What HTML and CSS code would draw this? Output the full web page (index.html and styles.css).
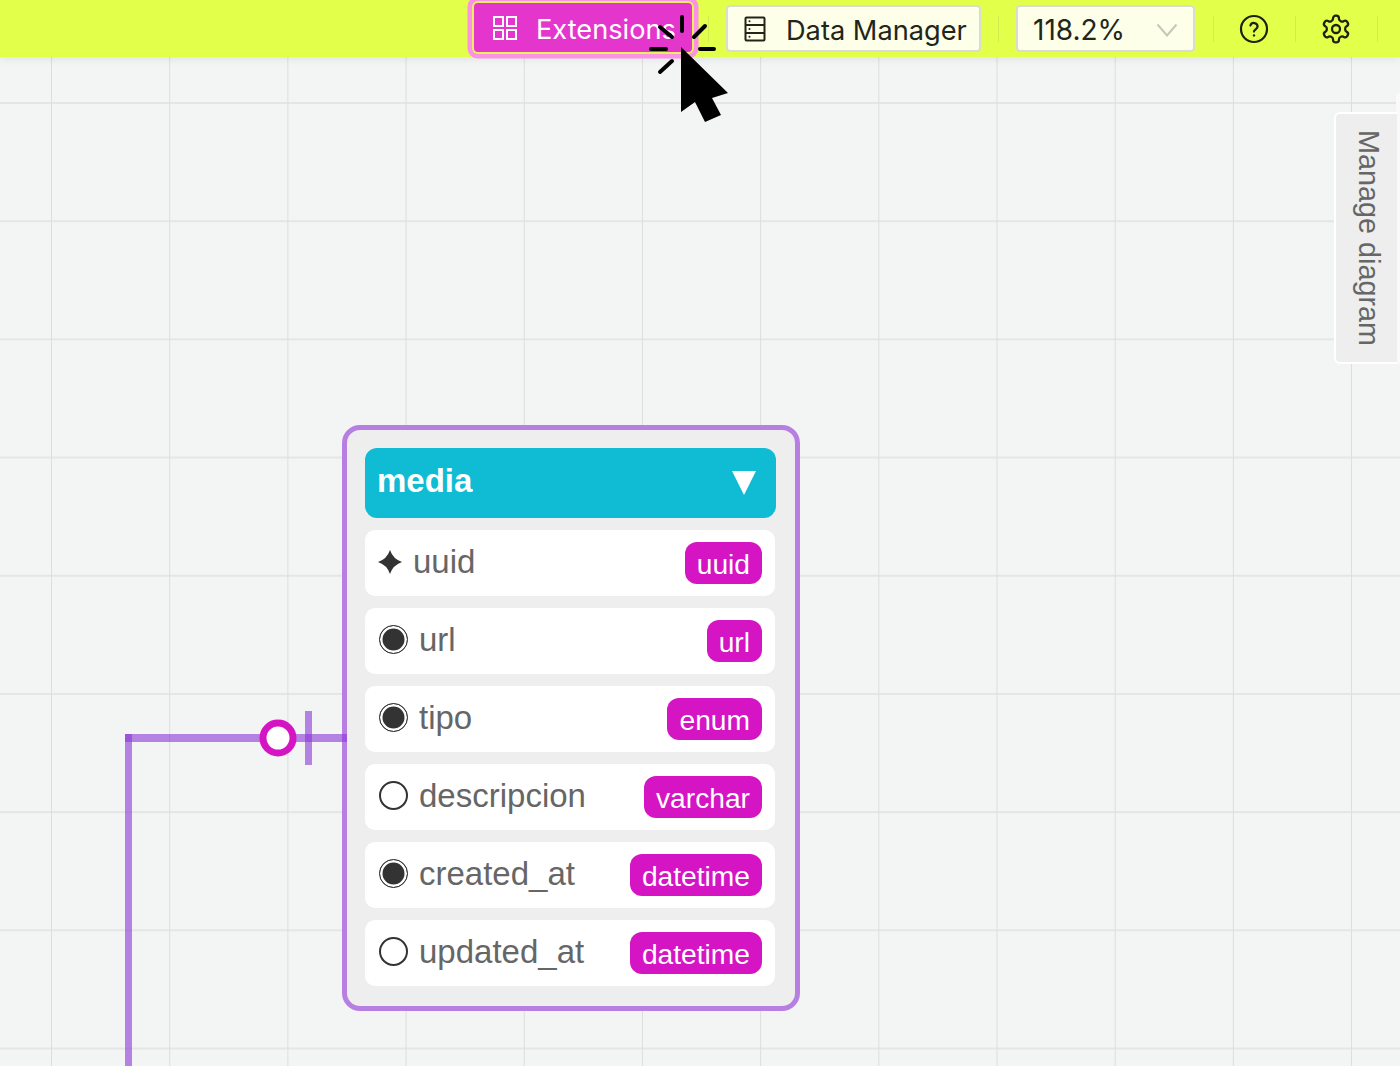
FILE: index.html
```html
<!DOCTYPE html>
<html lang="en">

<head>
    <meta charset="UTF-8">
    <title>Diagram editor</title>
    <link rel="stylesheet" href="styles.css">
</head>

<body>
    <header class="toolbar">
        <button class="btn btn-ext">
            <svg class="btn-icon" viewBox="0 0 26 26" fill="none" stroke="#fff" stroke-width="2">
                <rect x="2" y="2" width="9" height="9" />
                <rect x="15" y="2" width="9" height="9" />
                <rect x="2" y="15" width="9" height="9" />
                <rect x="15" y="15" width="9" height="9" />
            </svg>
            <span>Extensions</span>
        </button>
        <span class="sep"></span>
        <button class="btn btn-data">
            <svg class="btn-icon" viewBox="0 0 26 26" fill="none" stroke="#22251a" stroke-width="2">
                <rect x="3.5" y="1.5" width="19" height="23" rx="1" />
                <path d="M3.5 9h19M3.5 17h19" />
                <circle cx="7.5" cy="5.3" r="1" fill="#22251a" stroke="none" />
                <circle cx="7.5" cy="13" r="1" fill="#22251a" stroke="none" />
                <circle cx="7.5" cy="20.8" r="1" fill="#22251a" stroke="none" />
            </svg>
            <span>Data Manager</span>
        </button>
        <span class="sep"></span>
        <div class="zoom-select">
            <span>118.2%</span>
            <svg width="22" height="14" viewBox="0 0 22 14" fill="none" stroke="#c4c7bb" stroke-width="2">
                <path d="M1.5 1.5 11 12.5 20.5 1.5" />
            </svg>
        </div>
        <span class="sep"></span>
        <button class="icon-btn">
            <svg width="30" height="30" viewBox="0 0 30 30" fill="none" stroke="#1d2012" stroke-width="2.2" stroke-linecap="round">
                <circle cx="15" cy="15" r="13" />
                <path d="M11.4 11.5a3.7 3.7 0 0 1 7.2 1.1c0 2.4-3.6 3-3.6 5" />
                <circle cx="15" cy="21.4" r="1.2" fill="#1d2012" stroke="none" />
            </svg>
        </button>
        <span class="sep"></span>
        <button class="icon-btn">
            <svg width="32" height="32" viewBox="0 0 24 24" fill="none" stroke="#1d2012" stroke-width="1.7" stroke-linecap="round" stroke-linejoin="round">
                <path d="M12.22 2h-.44a2 2 0 0 0-2 2v.18a2 2 0 0 1-1 1.73l-.43.25a2 2 0 0 1-2 0l-.15-.08a2 2 0 0 0-2.73.73l-.22.38a2 2 0 0 0 .73 2.73l.15.1a2 2 0 0 1 1 1.72v.51a2 2 0 0 1-1 1.74l-.15.09a2 2 0 0 0-.73 2.73l.22.38a2 2 0 0 0 2.73.73l.15-.08a2 2 0 0 1 2 0l.43.25a2 2 0 0 1 1 1.73V20a2 2 0 0 0 2 2h.44a2 2 0 0 0 2-2v-.18a2 2 0 0 1 1-1.73l.43-.25a2 2 0 0 1 2 0l.15.08a2 2 0 0 0 2.73-.73l.22-.39a2 2 0 0 0-.73-2.73l-.15-.08a2 2 0 0 1-1-1.74v-.5a2 2 0 0 1 1-1.74l.15-.09a2 2 0 0 0 .73-2.73l-.22-.38a2 2 0 0 0-2.73-.73l-.15.08a2 2 0 0 1-2 0l-.43-.25a2 2 0 0 1-1-1.73V4a2 2 0 0 0-2-2z" />
                <circle cx="12" cy="12" r="3" />
            </svg>
        </button>
        <span class="sep"></span>
    </header>

    <main class="canvas">
        <section class="table-node">
            <div class="table-head">
                <span class="table-title">media</span>
                <span class="caret"></span>
            </div>
            <div class="field">
                <svg class="key-icon" width="26" height="26" viewBox="0 0 26 26">
                    <path d="M13 1Q16 10 25 13 16 16 13 25 10 16 1 13 10 10 13 1Z" fill="#333" />
                </svg>
                <span class="field-name">uuid</span>
                <span class="badge">uuid</span>
            </div>
            <div class="field">
                <span class="dot on"></span>
                <span class="field-name">url</span>
                <span class="badge">url</span>
            </div>
            <div class="field">
                <span class="dot on"></span>
                <span class="field-name">tipo</span>
                <span class="badge">enum</span>
            </div>
            <div class="field">
                <span class="dot"></span>
                <span class="field-name">descripcion</span>
                <span class="badge">varchar</span>
            </div>
            <div class="field">
                <span class="dot on"></span>
                <span class="field-name">created_at</span>
                <span class="badge">datetime</span>
            </div>
            <div class="field">
                <span class="dot"></span>
                <span class="field-name">updated_at</span>
                <span class="badge">datetime</span>
            </div>
        </section>

        <!-- relationship line -->
        <svg class="connector" width="360" height="1066" viewBox="0 0 360 1066">
            <g fill="#8a35d6" fill-opacity="0.6">
                <rect x="125" y="734" width="7" height="332" />
                <rect x="125" y="734" width="222" height="8" />
                <rect x="305" y="711" width="7" height="54" />
            </g>
            <circle cx="278" cy="738" r="15" fill="#fff" stroke="#d515c4" stroke-width="7" />
        </svg>

        <div class="side-panel"></div>
        <div class="side-tab">Manage diagram</div>
    </main>

    <!-- click pointer -->
    <svg class="pointer" width="90" height="120" viewBox="0 0 90 120">
        <g stroke="#000" stroke-width="4" stroke-linecap="round">
            <path d="M42 3V17M65 12 54 23M60 35H74M11 35H26M20 13 32 23M32 47 20 58" />
        </g>
        <path d="M41 33 88 79 72 84 81 101 65 108 55 88 41 98Z" fill="#000" />
    </svg>
</body>

</html>
```

FILE: styles.css
```css
* {
    box-sizing: border-box;
}

html,
body {
    margin: 0;
    height: 100%;
    overflow: hidden;
}

body {
    position: relative;
    font-family: Inter, "Liberation Sans", sans-serif;
    background-color: #f3f5f4;
}

button {
    font-family: inherit;
    cursor: pointer;
}

.toolbar {
    position: relative;
    z-index: 2;
    height: 57px;
    padding-right: 22px;
    display: flex;
    align-items: center;
    justify-content: flex-end;
    gap: 17px;
    background-color: #e2ff4a;
    box-shadow: 0 2px 8px rgba(0, 0, 0, 0.08);
}

.sep {
    width: 1px;
    height: 26px;
    background-color: #d3ea52;
}

.btn {
    display: flex;
    align-items: center;
    gap: 18px;
    height: 47px;
    font-size: 27.2px;
    border-radius: 4px;
    white-space: nowrap;
}

.btn span {
    padding-top: 3px;
}

.btn-icon {
    width: 26px;
    height: 26px;
    flex: none;
}

.btn-ext {
    width: 218px;
    height: 49px;
    margin-top: -2px;
    margin-right: -1px;
    padding: 0 0 0 18px;
    color: #fff;
    border: 0;
    background-color: #e436cd;
    box-shadow: 0 0 0 2px #e8f05c, 0 0 0 6.5px #fb92e6;
}

.btn-data {
    width: 255px;
    padding: 0 0 0 14px;
    color: #22251a;
    border: 2px solid #dbdcd0;
    background-color: #fdffe9;
}

.zoom-select {
    width: 179px;
    height: 47px;
    margin-right: 1px;
    padding: 3px 15px 0 15px;
    display: flex;
    align-items: center;
    justify-content: space-between;
    font-size: 28px;
    color: #22251a;
    border: 2px solid #dbdcd0;
    border-radius: 4px;
    background-color: #fdffe9;
}

.icon-btn {
    width: 46px;
    height: 47px;
    margin-right: 1px;
    padding: 0;
    display: flex;
    align-items: center;
    justify-content: center;
    border: 0;
    background: none;
}

.canvas {
    position: absolute;
    inset: 0;
    background-image:
        linear-gradient(to right, #dcdedd 1px, transparent 1px),
        linear-gradient(to bottom, #e4e6e5 2px, transparent 2px);
    background-size: 118.2px 118.2px;
    background-position: 51px 102px;
}

.connector {
    position: absolute;
    left: 0;
    top: 0;
}

.table-node {
    position: absolute;
    left: 342px;
    top: 425px;
    width: 458px;
    height: 586px;
    padding: 18px 19px 18px 18px;
    display: flex;
    flex-direction: column;
    gap: 12px;
    font-family: "Liberation Sans", Arial, sans-serif;
    border: 5px solid #b87fe3;
    border-radius: 18px;
    background-color: #eeeeee;
}

.table-head {
    height: 70px;
    padding: 0 20px 0 12px;
    display: flex;
    align-items: center;
    justify-content: space-between;
    font-size: 33px;
    font-weight: bold;
    color: #fff;
    border-radius: 12px;
    background-color: #0fbcd4;
}

.table-title {
    margin-bottom: 4px;
}

.caret {
    width: 0;
    height: 0;
    border-left: 12px solid transparent;
    border-right: 12px solid transparent;
    border-top: 24px solid #fff;
}

.field {
    height: 66px;
    margin-right: 1px;
    padding: 0 13px 0 14px;
    display: flex;
    align-items: center;
    gap: 11px;
    border-radius: 10px;
    background-color: #fff;
}

.key-icon {
    flex: none;
    margin: -2px -1px 0 -2px;
}

.field-name {
    flex: 1;
    padding-bottom: 2px;
    font-size: 33px;
    color: #666;
}

.dot {
    flex: none;
    width: 29px;
    height: 29px;
    margin-top: -4px;
    border: 2.5px solid #333;
    border-radius: 50%;
    background-color: #fff;
}

.dot.on {
    border-width: 1.5px;
    background-color: #333;
    box-shadow: inset 0 0 0 2.5px #fff;
}

.badge {
    flex: none;
    height: 42px;
    padding: 3px 12px 0;
    display: flex;
    align-items: center;
    font-size: 28.2px;
    color: #fff;
    border-radius: 12px;
    background-color: #d515c4;
}

.side-panel {
    position: absolute;
    right: 0;
    top: 93px;
    width: 4px;
    height: 271px;
    border-top-left-radius: 5px;
    background-color: #fafafa;
}

.side-tab {
    position: absolute;
    left: 1334px;
    top: 112px;
    width: 63px;
    height: 252px;
    padding-left: 4px;
    display: flex;
    align-items: center;
    justify-content: center;
    writing-mode: vertical-rl;
    font-family: "Liberation Sans", Arial, sans-serif;
    font-size: 28.8px;
    color: #666;
    border: 2px solid #fff;
    border-right: 0;
    border-radius: 6px 0 0 6px;
    background-color: #eeeeee;
}

.pointer {
    position: absolute;
    z-index: 3;
    left: 640px;
    top: 14px;
}
```
